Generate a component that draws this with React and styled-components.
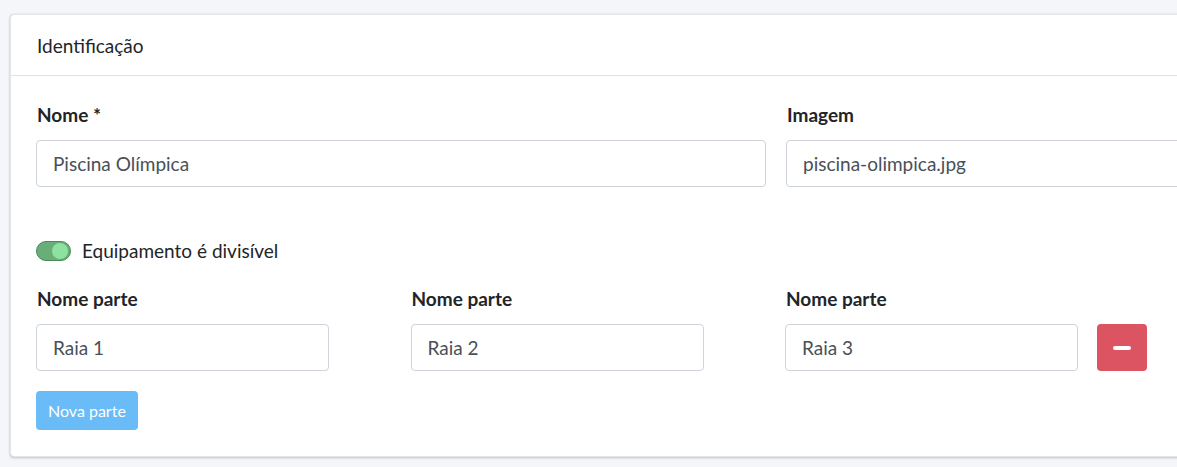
import React from 'react';
import styled, { createGlobalStyle } from 'styled-components';

const GlobalStyle = createGlobalStyle`
    html, body {
        margin: 0;
        padding: 0;
        background: #f4f6f9;
        font-family: Lato, "Liberation Sans", sans-serif;
        overflow: hidden;
    }
    * { box-sizing: border-box; }
`;

const Page = styled.div`
    width: 1177px;
    height: 467px;
    padding: 14px 0 0 10px;
    overflow: hidden;
`;

const Card = styled.section`
    width: 1560px;
    background: #fff;
    border: 1px solid #e3e5e8;
    border-radius: 4px;
    box-shadow: 0 0 1px rgba(0,0,0,.125), 0 1px 3px rgba(0,0,0,.2);
`;

const CardHeader = styled.header`
    height: 61px;
    padding: 0 26px;
    display: flex;
    align-items: center;
    border-bottom: 1px solid #dfe1e4;
    font-size: 19px;
    color: #212529;
`;

const CardBody = styled.div`
    padding: 27px 25px 26px 25px;
`;

const Row = styled.div`
    display: grid;
    grid-template-columns: ${p => p.$cols};
    column-gap: ${p => p.$gap || 20}px;
`;

const Field = styled.div`
    display: flex;
    flex-direction: column;
`;

const Label = styled.label`
    font-size: 19px;
    font-weight: 700;
    color: #212529;
    line-height: 24px;
    margin-bottom: 13px;
    padding-left: 1px;
`;

const InputLine = styled.div`
    display: flex;
    align-items: center;
    gap: 19px;
`;

const Input = styled.input`
    flex-shrink: 0;
    width: ${p => p.$w || '100%'};
    height: 47px;
    padding: 0 16px;
    border: 1px solid #ced4da;
    border-radius: 4px;
    font-family: inherit;
    font-size: 19px;
    color: #495057;
    background: #fff;
    outline: none;
`;

const RemoveButton = styled.button`
    flex-shrink: 0;
    width: 50px;
    height: 47px;
    border: none;
    border-radius: 4px;
    background: #dc5461;
    display: flex;
    align-items: center;
    justify-content: center;
    padding: 0;

    &::before {
        content: '';
        width: 18px;
        height: 4px;
        border-radius: 2px;
        background: #fff;
    }
`;

const SwitchRow = styled.label`
    display: flex;
    align-items: center;
    gap: 11px;
    font-size: 19px;
    color: #212529;
    margin: 52px 0 25px;
`;

const Track = styled.span`
    position: relative;
    width: 35px;
    height: 20px;
    border-radius: 10px;
    background: #69ad79;
    border: 1px solid #4a8b59;
`;

const Knob = styled.span`
    position: absolute;
    right: 2px;
    top: 1px;
    width: 16px;
    height: 16px;
    border-radius: 50%;
    background: #8de29f;
`;

const AddButton = styled.button`
    margin-top: 20px;
    height: 39px;
    padding: 0 12px;
    border: none;
    border-radius: 4px;
    background: #69bcf7;
    color: #fff;
    font-family: inherit;
    font-size: 16px;
`;

const parts = ['Raia 1', 'Raia 2', 'Raia 3'];

export default function App() {
    return (
        <Page>
            <GlobalStyle />
            <Card>
                <CardHeader>Identificação</CardHeader>
                <CardBody>
                    <Row $cols="730px 730px">
                        <Field>
                            <Label>Nome *</Label>
                            <Input defaultValue="Piscina Olímpica" />
                        </Field>
                        <Field>
                            <Label>Imagem</Label>
                            <Input defaultValue="piscina-olimpica.jpg" />
                        </Field>
                    </Row>
                    <SwitchRow>
                        <Track><Knob /></Track>
                        Equipamento é divisível
                    </SwitchRow>
                    <Row $cols="355px 355px 355px" $gap={19.5}>
                        {parts.map((p, i) => (
                            <Field key={p}>
                                <Label>Nome parte</Label>
                                <InputLine>
                                    <Input $w="293px" defaultValue={p} />
                                    {i === parts.length - 1 && <RemoveButton aria-label="Remover" />}
                                </InputLine>
                            </Field>
                        ))}
                    </Row>
                    <AddButton>Nova parte</AddButton>
                </CardBody>
            </Card>
        </Page>
    );
}
